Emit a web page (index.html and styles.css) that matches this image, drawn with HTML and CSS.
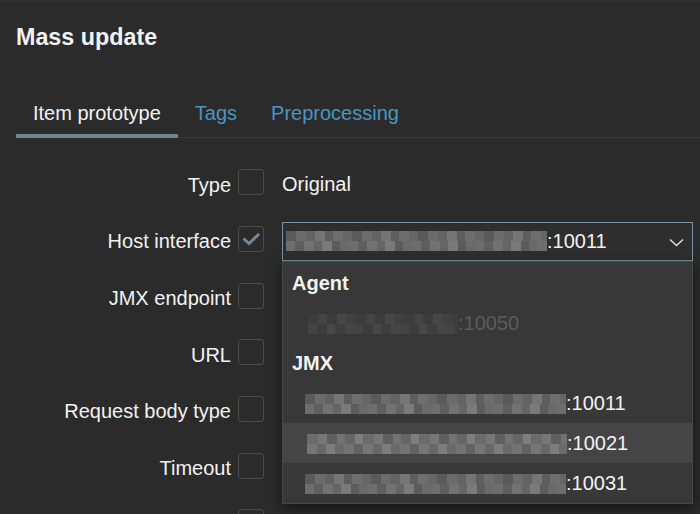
FILE: index.html
```html
<!DOCTYPE html>
<html lang="en">
<head>
    <meta charset="UTF-8">
    <meta name="viewport" content="width=device-width, initial-scale=1.0">
    <title>Mass update</title>
    <link rel="stylesheet" href="styles.css">
</head>
<body>
    <div class="overlay-dialog">
        <h1 class="dialog-title">Mass update</h1>

        <ul class="tabs">
            <li class="tab active">Item prototype</li>
            <li class="tab">Tags</li>
            <li class="tab">Preprocessing</li>
        </ul>

        <div class="form-list">
            <div class="form-row">
                <label class="form-label">Type</label>
                <span class="checkbox"></span>
                <div class="form-field">Original</div>
            </div>

            <div class="form-row">
                <label class="form-label">Host interface</label>
                <span class="checkbox checked">
                    <svg width="26" height="26" viewBox="0 0 26 26">
                        <polyline points="5.5,12.5 11,17.5 21,8" fill="none" stroke="#6f8a9c" stroke-width="3"/>
                    </svg>
                </span>
                <div class="form-field">
                    <div class="select">
                        <div class="select-value">
                            <span class="mosaic"></span>:10011
                        </div>
                        <svg class="select-arrow" width="15" height="9" viewBox="0 0 15 9">
                            <polyline points="1,1.5 7.5,7.5 14,1.5" fill="none" stroke="#dcdcdc" stroke-width="1.6"/>
                        </svg>

                        <ul class="dropdown">
                            <li class="group">Agent</li>
                            <li class="option disabled"><span class="mosaic dim short"></span>:10050</li>
                            <li class="group">JMX</li>
                            <li class="option"><span class="mosaic"></span>:10011</li>
                            <li class="option hover"><span class="mosaic alt"></span>:10021</li>
                            <li class="option"><span class="mosaic"></span>:10031</li>
                        </ul>
                    </div>
                </div>
            </div>

            <div class="form-row">
                <label class="form-label">JMX endpoint</label>
                <span class="checkbox"></span>
            </div>

            <div class="form-row">
                <label class="form-label">URL</label>
                <span class="checkbox"></span>
            </div>

            <div class="form-row">
                <label class="form-label">Request body type</label>
                <span class="checkbox"></span>
            </div>

            <div class="form-row">
                <label class="form-label">Timeout</label>
                <span class="checkbox"></span>
            </div>

            <div class="form-row">
                <label class="form-label"></label>
                <span class="checkbox"></span>
            </div>
        </div>
    </div>
</body>
</html>
```

FILE: styles.css
```css
html, body {
    height: 100%;
}

body {
    font-family: "Liberation Sans", Arial, sans-serif;
    font-size: 20px;
    color: #f2f2f2;
    background-color: #2b2b2b;
    margin: 0;
    padding: 0;
    overflow: hidden;
}

.overlay-dialog {
    border-top: 2px solid #303030;
    padding: 0 0 0 16px;
}

.dialog-title {
    font-size: 23.3px;
    font-weight: bold;
    line-height: 26px;
    margin: 22px 0 0;
}

.tabs {
    display: flex;
    list-style: none;
    margin: 41px 0 0;
    padding: 0;
    border-bottom: 1px solid #383838;
}

.tab {
    padding: 11px 17px 10px;
    line-height: 22px;
    color: #4796c4;
    border-bottom: 4px solid transparent;
    margin-bottom: -1px;
}

.tab.active {
    color: #f2f2f2;
    border-bottom-color: #6b8593;
}

.form-list {
    padding-top: 16px;
}

.form-row {
    display: flex;
    align-items: center;
    height: 56.67px;
}

.form-label {
    width: 215px;
    text-align: right;
    margin-top: 6px;
}

.checkbox {
    width: 24px;
    height: 24px;
    margin-left: 7px;
    border: 1px solid #4b4b4b;
    border-radius: 3px;
    background-color: #2b2b2b;
    position: relative;
    flex-shrink: 0;
}

.checkbox svg {
    position: absolute;
    left: -1px;
    top: -1px;
}

.form-field {
    margin-left: 18px;
    margin-top: 5px;
}

.select {
    position: relative;
    width: 409px;
    height: 37px;
    border: 1px solid #7793a5;
    background-color: #2e2e2e;
}

.select-value {
    display: flex;
    align-items: center;
    height: 37px;
    padding-left: 3px;
}

.select-arrow {
    position: absolute;
    right: 8px;
    top: 15px;
}

.mosaic {
    display: inline-block;
    width: 261px;
    height: 20px;
    background:
        repeating-linear-gradient(90deg, #5a5a5a 0 10px, #6c6c6c 10px 20px, #636363 20px 29px, #757575 29px 39px, #5e5e5e 39px 47px, #6e6e6e 47px 57px, #666 57px 66px) top / 100% 50% no-repeat,
        repeating-linear-gradient(90deg, #6e6e6e 0 9px, #5f5f5f 9px 18px, #727272 18px 28px, #656565 28px 36px, #7a7a7a 36px 46px, #5c5c5c 46px 54px, #6a6a6a 54px 63px) bottom / 100% 50% no-repeat;
}

.mosaic.alt {
    width: 260px;
    margin-left: 2px;
    background:
        repeating-linear-gradient(90deg, #6b6b6b 0 11px, #777 11px 20px, #5f5f5f 20px 30px, #727272 30px 38px, #666 38px 48px, #7e7e7e 48px 56px) top / 100% 50% no-repeat,
        repeating-linear-gradient(90deg, #767676 0 10px, #686868 10px 19px, #7c7c7c 19px 28px, #6a6a6a 28px 37px, #737373 37px 47px, #636363 47px 56px) bottom / 100% 50% no-repeat;
}

.mosaic.dim {
    background:
        repeating-linear-gradient(90deg, #3d3d3d 0 10px, #444 10px 19px, #3b3b3b 19px 29px, #474747 29px 38px, #404040 38px 48px) top / 100% 50% no-repeat,
        repeating-linear-gradient(90deg, #444 0 9px, #3c3c3c 9px 19px, #484848 19px 27px, #3e3e3e 27px 37px, #454545 37px 46px) bottom / 100% 50% no-repeat;
}

.mosaic.short {
    width: 150px;
    margin-left: 3px;
}

.dropdown {
    position: absolute;
    top: 38px;
    left: -1px;
    width: 409px;
    list-style: none;
    margin: 0;
    padding: 1px 0 0;
    background-color: #383838;
    border: 1px solid #474747;
    box-shadow: 0 4px 12px rgba(0, 0, 0, 0.5);
    z-index: 10;
}

.dropdown li {
    box-sizing: border-box;
    height: 40px;
    padding-top: 2px;
    display: flex;
    align-items: center;
}

.group {
    font-weight: bold;
    padding-left: 9px;
}

.option {
    padding-left: 22px;
}

.option.hover {
    background-color: #454545;
}

.option.disabled {
    color: #5c5c5c;
}
```
